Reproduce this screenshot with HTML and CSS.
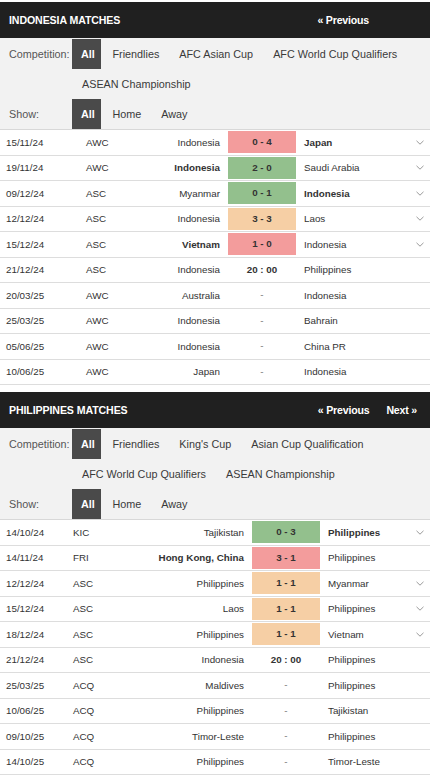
FILE: index.html
```html
<!DOCTYPE html>
<html lang="en">
<head>
<meta charset="utf-8">
<title>Matches</title>
<link rel="stylesheet" href="styles.css">
</head>
<body>
<section class="block">
  <div class="head">
    <h2 class="title">INDONESIA MATCHES</h2>
    <nav class="pager"><a class="plink">« Previous</a><span class="pslot"></span></nav>
  </div>
  <div class="filters">
    <div class="frow"><span class="flabel">Competition:</span>
      <div class="opts"><span class="opt active">All</span><span class="opt">Friendlies</span><span class="opt">AFC Asian Cup</span><span class="opt">AFC World Cup Qualifiers</span><span class="opt">ASEAN Championship</span></div>
    </div>
    <div class="frow"><span class="flabel">Show:</span>
      <div class="opts"><span class="opt active">All</span><span class="opt">Home</span><span class="opt">Away</span></div>
    </div>
  </div>
  <div class="rows t1">
    <div class="row"><span class="date">15/11/24</span><span class="comp">AWC</span><span class="home">Indonesia</span><span class="score lose">0 - 4</span><span class="away win">Japan</span><span class="chev"><svg width="8" height="5" viewBox="0 0 8 5"><polyline points="0.5,0.8 4,4.2 7.5,0.8" fill="none" stroke="#9a9a9a" stroke-width="1"/></svg></span></div>
    <div class="row"><span class="date">19/11/24</span><span class="comp">AWC</span><span class="home win">Indonesia</span><span class="score won">2 - 0</span><span class="away">Saudi Arabia</span><span class="chev"><svg width="8" height="5" viewBox="0 0 8 5"><polyline points="0.5,0.8 4,4.2 7.5,0.8" fill="none" stroke="#9a9a9a" stroke-width="1"/></svg></span></div>
    <div class="row"><span class="date">09/12/24</span><span class="comp">ASC</span><span class="home">Myanmar</span><span class="score won">0 - 1</span><span class="away win">Indonesia</span><span class="chev"><svg width="8" height="5" viewBox="0 0 8 5"><polyline points="0.5,0.8 4,4.2 7.5,0.8" fill="none" stroke="#9a9a9a" stroke-width="1"/></svg></span></div>
    <div class="row"><span class="date">12/12/24</span><span class="comp">ASC</span><span class="home">Indonesia</span><span class="score draw">3 - 3</span><span class="away">Laos</span><span class="chev"><svg width="8" height="5" viewBox="0 0 8 5"><polyline points="0.5,0.8 4,4.2 7.5,0.8" fill="none" stroke="#9a9a9a" stroke-width="1"/></svg></span></div>
    <div class="row"><span class="date">15/12/24</span><span class="comp">ASC</span><span class="home win">Vietnam</span><span class="score lose">1 - 0</span><span class="away">Indonesia</span><span class="chev"><svg width="8" height="5" viewBox="0 0 8 5"><polyline points="0.5,0.8 4,4.2 7.5,0.8" fill="none" stroke="#9a9a9a" stroke-width="1"/></svg></span></div>
    <div class="row"><span class="date">21/12/24</span><span class="comp">ASC</span><span class="home">Indonesia</span><span class="score time">20 : 00</span><span class="away">Philippines</span><span class="chev"></span></div>
    <div class="row"><span class="date">20/03/25</span><span class="comp">AWC</span><span class="home">Australia</span><span class="score tbd">-</span><span class="away">Indonesia</span><span class="chev"></span></div>
    <div class="row"><span class="date">25/03/25</span><span class="comp">AWC</span><span class="home">Indonesia</span><span class="score tbd">-</span><span class="away">Bahrain</span><span class="chev"></span></div>
    <div class="row"><span class="date">05/06/25</span><span class="comp">AWC</span><span class="home">Indonesia</span><span class="score tbd">-</span><span class="away">China PR</span><span class="chev"></span></div>
    <div class="row"><span class="date">10/06/25</span><span class="comp">AWC</span><span class="home">Japan</span><span class="score tbd">-</span><span class="away">Indonesia</span><span class="chev"></span></div>
  </div>
</section>

<section class="block">
  <div class="head">
    <h2 class="title">PHILIPPINES MATCHES</h2>
    <nav class="pager"><a class="plink">« Previous</a><a class="plink">Next »</a></nav>
  </div>
  <div class="filters">
    <div class="frow"><span class="flabel">Competition:</span>
      <div class="opts"><span class="opt active">All</span><span class="opt">Friendlies</span><span class="opt">King's Cup</span><span class="opt">Asian Cup Qualification</span><span class="opt">AFC World Cup Qualifiers</span><span class="opt">ASEAN Championship</span></div>
    </div>
    <div class="frow"><span class="flabel">Show:</span>
      <div class="opts"><span class="opt active">All</span><span class="opt">Home</span><span class="opt">Away</span></div>
    </div>
  </div>
  <div class="rows t2">
    <div class="row"><span class="date">14/10/24</span><span class="comp">KIC</span><span class="home">Tajikistan</span><span class="score won">0 - 3</span><span class="away win">Philippines</span><span class="chev"><svg width="8" height="5" viewBox="0 0 8 5"><polyline points="0.5,0.8 4,4.2 7.5,0.8" fill="none" stroke="#9a9a9a" stroke-width="1"/></svg></span></div>
    <div class="row"><span class="date">14/11/24</span><span class="comp">FRI</span><span class="home win">Hong Kong, China</span><span class="score lose">3 - 1</span><span class="away">Philippines</span><span class="chev"></span></div>
    <div class="row"><span class="date">12/12/24</span><span class="comp">ASC</span><span class="home">Philippines</span><span class="score draw">1 - 1</span><span class="away">Myanmar</span><span class="chev"><svg width="8" height="5" viewBox="0 0 8 5"><polyline points="0.5,0.8 4,4.2 7.5,0.8" fill="none" stroke="#9a9a9a" stroke-width="1"/></svg></span></div>
    <div class="row"><span class="date">15/12/24</span><span class="comp">ASC</span><span class="home">Laos</span><span class="score draw">1 - 1</span><span class="away">Philippines</span><span class="chev"><svg width="8" height="5" viewBox="0 0 8 5"><polyline points="0.5,0.8 4,4.2 7.5,0.8" fill="none" stroke="#9a9a9a" stroke-width="1"/></svg></span></div>
    <div class="row"><span class="date">18/12/24</span><span class="comp">ASC</span><span class="home">Philippines</span><span class="score draw">1 - 1</span><span class="away">Vietnam</span><span class="chev"><svg width="8" height="5" viewBox="0 0 8 5"><polyline points="0.5,0.8 4,4.2 7.5,0.8" fill="none" stroke="#9a9a9a" stroke-width="1"/></svg></span></div>
    <div class="row"><span class="date">21/12/24</span><span class="comp">ASC</span><span class="home">Indonesia</span><span class="score time">20 : 00</span><span class="away">Philippines</span><span class="chev"></span></div>
    <div class="row"><span class="date">25/03/25</span><span class="comp">ACQ</span><span class="home">Maldives</span><span class="score tbd">-</span><span class="away">Philippines</span><span class="chev"></span></div>
    <div class="row"><span class="date">10/06/25</span><span class="comp">ACQ</span><span class="home">Philippines</span><span class="score tbd">-</span><span class="away">Tajikistan</span><span class="chev"></span></div>
    <div class="row"><span class="date">09/10/25</span><span class="comp">ACQ</span><span class="home">Timor-Leste</span><span class="score tbd">-</span><span class="away">Philippines</span><span class="chev"></span></div>
    <div class="row"><span class="date">14/10/25</span><span class="comp">ACQ</span><span class="home">Philippines</span><span class="score tbd">-</span><span class="away">Timor-Leste</span><span class="chev"></span></div>
  </div>
</section>
</body>
</html>
```

FILE: styles.css
```css
* { box-sizing: border-box; }
html, body { margin: 0; padding: 0; background: #ffffff; }
body {
  font-family: "Liberation Sans", Arial, sans-serif;
  color: #333333;
  padding-top: 2px;
  width: 430px;
}
.block { margin-bottom: 7px; }

.head {
  height: 36px;
  background: #202020;
  display: flex;
  align-items: center;
  justify-content: space-between;
  padding: 0 13px 0 9px;
}
.title {
  margin: 0;
  font-size: 10.6px;
  font-weight: bold;
  color: #ffffff;
  letter-spacing: -0.1px;
}
.pager { display: flex; gap: 17px; align-items: center; }
.plink {
  font-size: 10.6px;
  font-weight: bold;
  color: #ffffff;
  text-decoration: none;
  letter-spacing: -0.2px;
}
.pslot { width: 31px; }

.filters {
  background: #f2f2f2;
  padding-top: 1px;
  border-bottom: 1px solid #d8d8d8;
}
.frow { display: flex; align-items: flex-start; }
.flabel {
  width: 72px;
  flex: none;
  padding-left: 9px;
  height: 30px;
  line-height: 30px;
  font-size: 10.8px;
  color: #555555;
}
.opts { display: flex; flex-wrap: wrap; flex: 1; }
.opt {
  height: 30px;
  line-height: 30px;
  padding: 0 10px;
  font-size: 10.8px;
  color: #3a3a3a;
  white-space: nowrap;
}
.opt.active {
  background: #4a4a4a;
  color: #ffffff;
  font-weight: bold;
  padding: 0 8px 0 9px;
  width: 29px;
  margin-right: 1.5px;
}

.rows { background: #ffffff; }
.row {
  display: grid;
  height: 25.5px;
  align-items: center;
  border-bottom: 1px solid #dddddd;
  font-size: 9.8px;
  color: #333333;
}
.t1 .row { grid-template-columns: 80px 60px 88px 68px 114px 20px; }
.t2 .row { grid-template-columns: 67px 63px 122px 68px 90px 20px; }
.date { padding-left: 6px; }
.comp { padding-left: 6px; }
.home { text-align: right; padding-right: 8px; white-space: nowrap; }
.away { padding-left: 8px; white-space: nowrap; }
.win { font-weight: bold; }
.score {
  height: 22px;
  line-height: 22px;
  text-align: center;
  font-weight: bold;
  color: #333333;
}
.score.lose { background: #f39c9c; }
.score.won { background: #93c08d; }
.score.draw { background: #f6cfa5; }
.score.time { background: transparent; }
.score.tbd { background: transparent; font-weight: normal; color: #777777; }
.chev { display: flex; align-items: center; justify-content: center; height: 100%; }
.chev svg { display: block; }
```
